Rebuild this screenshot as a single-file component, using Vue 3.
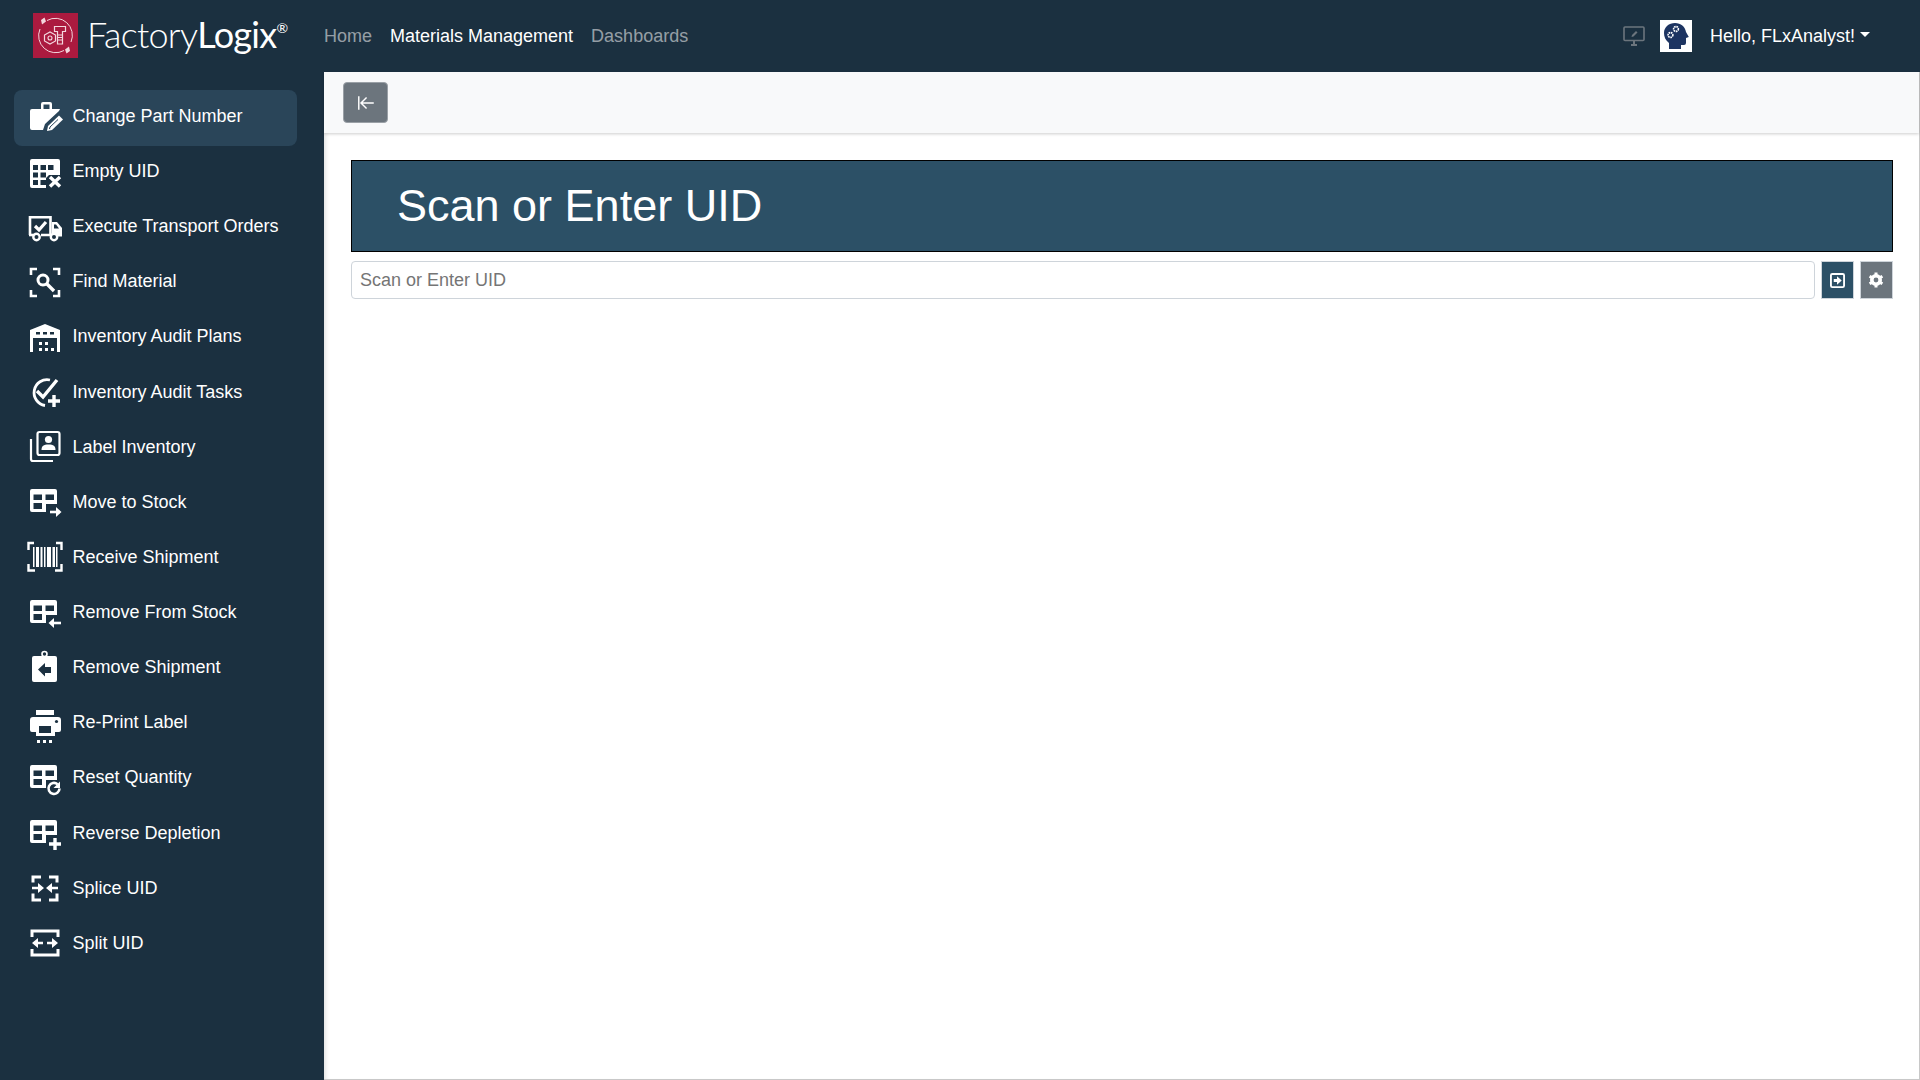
<script setup>
const table = '<path fill-rule="evenodd" d="M5 5h23a2 2 0 0 1 2 2v13H19v8H5a2 2 0 0 1-2-2V7a2 2 0 0 1 2-2zM6.500 10.500V16H15v-5.500zm12 0V16H27v-5.500zM6.500 19v6H15v-6z" fill="#fff"/>'
const items = [
  { label: 'Change Part Number', active: true, icon: '<path d="M14 11V6a2 2 0 0 1 2-2h7a2 2 0 0 1 2 2v5h-2.500V6.500h-6V11z" fill="#fff"/><path d="M5 11h28l-1 2-14 13-2 6H5a2 2 0 0 1-2-2V13a2 2 0 0 1 2-2z" fill="#fff"/><path d="M20 33l1-5 11-10.500 4 4L25 32z" fill="#fff"/><path d="M22.500 31l.5-2 8-7.500" stroke="#2a4559" stroke-width="1" fill="none"/>' },
  { label: 'Empty UID', icon: '<path fill-rule="evenodd" d="M5 5h26a2 2 0 0 1 2 2v14H22l-3 3v10H5a2 2 0 0 1-2-2V7a2 2 0 0 1 2-2zM6 11v5h5v-5zm7.500 0v5H19v-5zm7.500 0v5h5.500v-5zM6 18.500v5h5v-5zm7.500 0v5H19v-5zM6 26v5h5v-5zm7.500 0v5H19v-5z" fill="#fff"/><path d="M23 23l10 9.500M33 23l-10 9.500" stroke="#fff" stroke-width="3.400"/>' },
  { label: 'Execute Transport Orders', icon: '<path d="M3 26V8.200h20.500V26H14" stroke="#fff" stroke-width="2.600" fill="none"/><path d="M2 26h5" stroke="#fff" stroke-width="2.600"/><path d="M25 13h5l5 6v8.500H25z" fill="#fff"/><path d="M27 15.500v4h5l-3-4z" fill="#1b3040"/><path d="M8 17l4 4 7-8" stroke="#fff" stroke-width="3.200" fill="none"/><circle cx="9.500" cy="28" r="3.200" fill="#1b3040" stroke="#fff" stroke-width="2.400"/><circle cx="27" cy="28" r="3.200" fill="#1b3040" stroke="#fff" stroke-width="2.400"/>' },
  { label: 'Find Material', icon: '<path d="M10 5H4v6M26 5h6v6M4 26v6h6M32 26v6h-6" stroke="#fff" stroke-width="2.600" fill="none"/><circle cx="16" cy="16" r="5" fill="none" stroke="#fff" stroke-width="3"/><path d="M20 20l7 7" stroke="#fff" stroke-width="3.400"/>' },
  { label: 'Inventory Audit Plans', icon: '<path fill-rule="evenodd" d="M3 11L18 5l15 6v22h-3V19H6v14H3zM9 13v2.500h4V13zm7 0v2.500h4V13zm7 0v2.500h4V13z" fill="#fff"/><path d="M12 23h3v3h-3zM18 23h3v3h-3zM12 29h3v3h-3zM18 29h3v3h-3zM24 29h3v3h-3z" fill="#fff"/>' },
  { label: 'Inventory Audit Tasks', icon: '<path d="M23 6A13 13 0 1 0 18 31.500" stroke="#fff" stroke-width="2.800" fill="none"/><path d="M10 17l6 6L30 6" stroke="#fff" stroke-width="3.400" fill="none"/><path d="M27 21v12M21 27h12" stroke="#fff" stroke-width="3.400"/>' },
  { label: 'Label Inventory', icon: '<rect x="10.500" y="3" width="22" height="23" rx="2" fill="none" stroke="#fff" stroke-width="2.200"/><path d="M4 10v20a2 2 0 0 0 2 2h20" fill="none" stroke="#fff" stroke-width="2.200"/><circle cx="21.500" cy="10.500" r="3.600" fill="#fff"/><path d="M14.500 21c0-4 2-5.500 7-5.500s7 1.500 7 5.500z" fill="#fff"/>' },
  { label: 'Move to Stock', icon: table + '<path d="M23 28h10" stroke="#fff" stroke-width="2.600"/><path d="M29 23l5.500 5-5.500 5z" fill="#fff"/>' },
  { label: 'Receive Shipment', icon: '<path d="M7 4H1.500v7M29 4h5.500v7M1.500 25v6.500H8M34.500 25v6.500H28" stroke="#fff" stroke-width="2.400" fill="none"/><path d="M6 8h1.500v20H6zM9 8h3v20H9zM13.500 8h2v20h-2zM17 8h1.500v20H17zM20 8h4v20h-4zM25.500 8H28v20h-2.500zM29 8h1.500v20H29z" fill="#fff"/>' },
  { label: 'Remove From Stock', icon: table + '<path d="M34 28H25" stroke="#fff" stroke-width="2.600"/><path d="M27 23l-5.500 5 5.500 5z" fill="#fff"/>' },
  { label: 'Remove Shipment', icon: '<circle cx="17.500" cy="4" r="2.500" fill="none" stroke="#fff" stroke-width="1.600"/><path d="M7 6h21a2 2 0 0 1 2 2v22a2 2 0 0 1-2 2H7a2 2 0 0 1-2-2V8a2 2 0 0 1 2-2z" fill="#fff"/><path d="M11 19.500L18 13v4h6v6h-6v3.500z" fill="#1b3040"/>' },
  { label: 'Re-Print Label', icon: '<path d="M9 5h18v5H9z" fill="#fff"/><path fill-rule="evenodd" d="M6 12h25a3 3 0 0 1 3 3v10a2 2 0 0 1-2 2h-4v4H9v-4H5a2 2 0 0 1-2-2V15a3 3 0 0 1 3-3zm6 12v4h12v-7H12z" fill="#fff"/><circle cx="29.500" cy="16.500" r="1.600" fill="#1b3040"/><path d="M10 35h3v3h-3zM16 35h3v3h-3zM22 35h3v3h-3z" fill="#fff"/>' },
  { label: 'Reset Quantity', icon: table + '<path d="M32.500 28.500a5.500 5.500 0 1 1-2-4.300" stroke="#fff" stroke-width="2.600" fill="none"/><path d="M33 21.500v6.500h-6.500z" fill="#fff"/>' },
  { label: 'Reverse Depletion', icon: table + '<path d="M28 23v12M22 29h12" stroke="#fff" stroke-width="3.400"/>' },
  { label: 'Splice UID', icon: '<path d="M14 7H6v5.500M22 7h8v5.500M6 23.500V30h8M30 23.500V30h-8" stroke="#fff" stroke-width="3" fill="none"/><path d="M5 18h7M31 18h-7" stroke="#fff" stroke-width="2.600"/><path d="M17 18l-6-5v10zM19 18l6-5v10z" fill="#fff"/>' },
  { label: 'Split UID', icon: '<path d="M5 12V6h26v6M5 24v6h26v-6" stroke="#fff" stroke-width="3" fill="none"/><path d="M9 18h7M20 18h7" stroke="#fff" stroke-width="2.600"/><path d="M5 18l6-5v10zM31 18l-6-5v10z" fill="#fff"/>' },
]
</script>

<template>
  <div class="app">
    <header class="topbar">
      <div class="brand">
        <svg class="logo" viewBox="0 0 45 45">
          <rect width="45" height="45" fill="#ab1a3f" />
          <path d="M14 7.500A17 17 0 0 1 38 29M31 37.500A17 17 0 0 1 7 16" fill="none" stroke="#f3d6dd" stroke-width="1" />
          <path d="M13 8.500l-1.500-4 -3.500 2.500 1 4.500zM32 36.500l1.500 4 3.500-2.500-1-4.500z" fill="#f3d6dd" />
          <path d="M11.500 22l5.500-3 5.500 3v6l-5.500 3-5.500-3z" fill="none" stroke="#f3d6dd" stroke-width="1.200" />
          <circle cx="17" cy="25" r="2" fill="none" stroke="#f3d6dd" stroke-width="1.100" />
          <path d="M21.500 13.500h11v5h-3V31h-5V18.500h-3z" fill="none" stroke="#f3d6dd" stroke-width="1.200" />
          <path d="M25 22h4M25 24.500h4M25 27h4" stroke="#f3d6dd" />
        </svg>
        <span class="wordmark"><span class="thin">Factory</span><span class="logix">Logix</span><sup class="reg">®</sup></span>
      </div>
      <nav class="mainnav">
        <a class="nav-link">Home</a>
        <a class="nav-link current">Materials Management</a>
        <a class="nav-link">Dashboards</a>
      </nav>
      <div class="userarea">
        <svg class="monitor" viewBox="0 0 22 20">
          <rect x="1" y="1" width="20" height="13.500" rx="1" fill="none" stroke="#6c757d" stroke-width="1.600" />
          <path d="M8 19h6M11 15v4" stroke="#6c757d" stroke-width="2" />
          <path d="M8.500 11l.5-2 4-4 1.500 1.500-4 4z" fill="#6c757d" />
        </svg>
        <svg class="avatar" viewBox="0 0 32 32">
          <rect width="32" height="32" fill="#fff" />
          <path d="M9 29v-6C5.500 20 4 17 4 13 4 7 9 3 15 3c6 0 10 3.500 11 9l2.800 5-2.800 1v5a2 2 0 0 1-2 2h-3v4z" fill="#1d3461" />
          <circle cx="16" cy="9" r="2.400" fill="none" stroke="#fff" stroke-width="1.600" stroke-dasharray="1.500 .6" />
          <circle cx="10.500" cy="15" r="2.400" fill="none" stroke="#fff" stroke-width="1.600" stroke-dasharray="1.500 .6" />
        </svg>
        <span class="hello">Hello, FLxAnalyst!</span>
        <span class="caret"></span>
      </div>
    </header>

    <div class="body">
      <aside class="sidebar">
        <a v-for="item in items" :key="item.label" class="side-item" :class="{ active: item.active }">
          <svg class="side-icon" viewBox="0 0 36 36" v-html="item.icon"></svg>
          <span>{{ item.label }}</span>
        </a>
      </aside>

      <main class="content">
        <div class="toolbar">
          <button class="collapse">
            <svg viewBox="0 0 18 18" width="20" height="20">
              <path d="M2.500 3v12M16 9H4.500M9.500 4l-5 5 5 5" fill="none" stroke="#fff" stroke-width="1.300" />
            </svg>
          </button>
        </div>
        <section class="page">
          <h1 class="banner">Scan or Enter UID</h1>
          <div class="scanrow">
            <input class="scan-input" placeholder="Scan or Enter UID" />
            <button class="sq go">
              <svg viewBox="0 0 16 16" width="15" height="15">
                <rect x="1" y="1" width="14" height="14" rx="1.500" fill="none" stroke="#fff" stroke-width="2" />
                <path d="M4 6.500h3.500V3.500L12.500 8l-5 4.500v-3H4z" fill="#fff" />
              </svg>
            </button>
            <button class="sq gear">
              <svg viewBox="0 0 16 16" width="16" height="16">
                <circle cx="8" cy="8" r="4.200" fill="none" stroke="#fff" stroke-width="3.600" />
                <path d="M8 .6v14.800M1.600 4.300l12.800 7.400M1.600 11.700l12.800-7.400" stroke="#fff" stroke-width="3" stroke-dasharray="3 8.800" />
              </svg>
            </button>
          </div>
        </section>
      </main>
    </div>
  </div>
</template>

<style>
html, body { margin: 0; height: 100%; overflow: hidden; }
</style>

<style scoped>
.app {
  width: 1920px;
  height: 1080px;
  display: flex;
  flex-direction: column;
  background: #1b3040;
  font-family: "Liberation Sans", Arial, sans-serif;
  font-size: 18px;
  color: #fff;
}
.topbar {
  height: 72px;
  flex: none;
  display: flex;
  align-items: center;
}
.brand {
  width: 324px;
  flex: none;
  display: flex;
  align-items: center;
  padding-left: 33px;
  margin-bottom: 2px;
  box-sizing: border-box;
}
.logo { width: 45px; height: 45px; flex: none; }
.wordmark {
  margin-left: 9px;
  margin-bottom: 2px;
  font-family: Lato, "Open Sans", sans-serif;
  font-size: 36px;
  line-height: 45px;
  white-space: nowrap;
  letter-spacing: -0.7px;
}
.thin { font-weight: 300; }
.logix { font-weight: 400; }
.reg { font-size: 14px; line-height: 0; vertical-align: 15px; }
.mainnav { display: flex; gap: 18px; }
.nav-link { color: rgba(255, 255, 255, 0.55); }
.nav-link.current { color: #fff; }
.userarea {
  margin-left: auto;
  padding-right: 50px;
  display: flex;
  align-items: center;
}
.monitor { width: 22px; height: 20px; }
.avatar { width: 32px; height: 32px; margin-left: 15px; }
.hello { margin-left: 18px; }
.caret {
  margin-left: 5px;
  margin-top: -3px;
  border-top: 5px solid #fff;
  border-left: 5px solid transparent;
  border-right: 5px solid transparent;
}
.body { flex: 1; display: flex; min-height: 0; }
.sidebar {
  width: 324px;
  flex: none;
  box-sizing: border-box;
  padding: 18px 27px 0 14px;
  display: flex;
  flex-direction: column;
}
.side-item {
  height: 55.13px;
  flex: none;
  box-sizing: border-box;
  padding: 0 0 4px 13px;
  display: flex;
  align-items: center;
  gap: 9.5px;
  border-radius: 8px;
}
.side-item.active { height: 56px; background: #2a4559; }
.side-icon { width: 36px; height: 36px; flex: none; overflow: visible; }
.content {
  flex: 1;
  min-width: 0;
  display: flex;
  flex-direction: column;
  background: #fff;
  border-right: 1px solid #c8c8c8;
  border-bottom: 1px solid #c8c8c8;
  box-shadow: inset 5px 0 5px -4px rgba(0, 0, 0, 0.15);
}
.toolbar {
  height: 61px;
  flex: none;
  box-sizing: border-box;
  padding: 10px 19px;
  background: #f8f9fa;
  box-shadow: 0 1px 3px rgba(0, 0, 0, 0.2);
  position: relative;
}
.collapse {
  width: 45px;
  height: 41px;
  padding: 0;
  display: flex;
  align-items: center;
  justify-content: center;
  background: #6c757d;
  border: 1px solid #9aa0a6;
  border-radius: 4px;
}
.page { padding: 27px 26px 0 27px; }
.banner {
  margin: 0;
  height: 92px;
  box-sizing: border-box;
  padding-left: 45px;
  display: flex;
  align-items: center;
  background: #2c5066;
  border: 1px solid #000;
  font-size: 45px;
  font-weight: 400;
  color: #fff;
}
.scanrow { margin-top: 9px; display: flex; align-items: stretch; gap: 5.5px; height: 38px; }
.scan-input {
  flex: 1;
  min-width: 0;
  box-sizing: border-box;
  padding: 0 8px;
  border: 1px solid #ced4da;
  border-radius: 4px;
  font-family: inherit;
  font-size: 18px;
  outline: none;
}
.scan-input::placeholder { color: #757575; opacity: 1; }
.sq {
  width: 33.5px;
  padding: 0;
  display: flex;
  align-items: center;
  justify-content: center;
  border: 1px solid #ced4da;
}
.go { background: #2c5066; }
.gear { background: #6c757d; }
</style>
